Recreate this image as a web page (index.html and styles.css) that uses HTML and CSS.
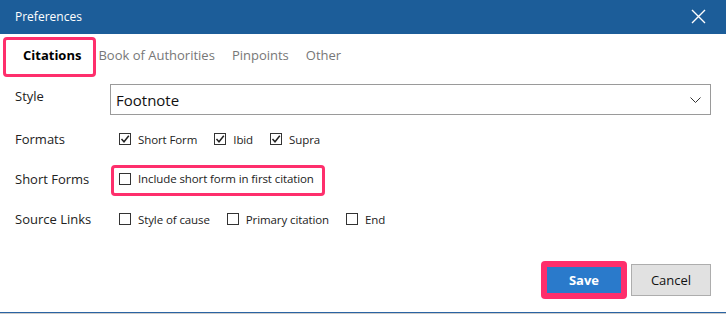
FILE: index.html
```html
<!DOCTYPE html>
<html lang="en">
<head>
  <meta charset="UTF-8" />
  <title>Preferences</title>
  <link rel="stylesheet" href="styles.css">
</head>
<body>
  <div class="dialog">
    <header class="titlebar">
      <span>Preferences</span>
      <svg class="close" width="15" height="15" viewBox="0 0 15 15"><path d="M1 1 L14 14 M14 1 L1 14" stroke="#fff" stroke-width="1.4" fill="none"/></svg>
    </header>

    <nav class="tabs">
      <span class="tab active">Citations</span>
      <span class="tab">Book of Authorities</span>
      <span class="tab">Pinpoints</span>
      <span class="tab">Other</span>
    </nav>

    <main class="form">
      <div class="row row-style">
        <label class="lbl">Style</label>
        <div class="select">
          <span>Footnote</span>
          <svg width="11" height="6" viewBox="0 0 11 6"><path d="M0.5 0.5 L5.5 5.5 L10.5 0.5" stroke="#333" stroke-width="1" fill="none"/></svg>
        </div>
      </div>

      <div class="row row-formats">
        <label class="lbl">Formats</label>
        <div class="checks">
          <span class="check"><span class="box on"><svg width="10" height="10" viewBox="0 0 10 10"><path d="M1.5 5 L4 7.8 L8.8 1.8" stroke="#222" stroke-width="1.5" fill="none"/></svg></span>Short Form</span>
          <span class="check"><span class="box on"><svg width="10" height="10" viewBox="0 0 10 10"><path d="M1.5 5 L4 7.8 L8.8 1.8" stroke="#222" stroke-width="1.5" fill="none"/></svg></span>Ibid</span>
          <span class="check"><span class="box on"><svg width="10" height="10" viewBox="0 0 10 10"><path d="M1.5 5 L4 7.8 L8.8 1.8" stroke="#222" stroke-width="1.5" fill="none"/></svg></span>Supra</span>
        </div>
      </div>

      <div class="row row-short">
        <label class="lbl">Short Forms</label>
        <div class="mark">
          <span class="check"><span class="box"></span>Include short form in first citation</span>
        </div>
      </div>

      <div class="row row-links">
        <label class="lbl">Source Links</label>
        <div class="checks">
          <span class="check"><span class="box"></span>Style of cause</span>
          <span class="check"><span class="box"></span>Primary citation</span>
          <span class="check"><span class="box"></span>End</span>
        </div>
      </div>
    </main>

    <div class="actions">
      <div class="save-mark"><button class="btn save">Save</button></div>
      <button class="btn cancel">Cancel</button>
    </div>
  </div>
  <div class="taskbar"></div>
</body>
</html>
```

FILE: styles.css
```css
body {
  margin: 0;
  width: 726px;
  height: 314px;
  overflow: hidden;
  font-family: 'Open Sans', 'Noto Sans', sans-serif;
  color: #222;
  background: #fff;
}
.dialog { height: 312px; display: flex; flex-direction: column; }

.titlebar {
  height: 33px;
  background-color: #1c5d99;
  color: #fff;
  font-size: 12px;
  display: flex;
  align-items: center;
  justify-content: space-between;
  padding: 0 20px 1px 15px;
}
.close { display: block; }

.tabs { display: flex; align-items: center; gap: 17px; margin: 3px 0 0 3px; height: 40px; }
.tab { font-size: 13px; color: #777; padding-bottom: 4px; }
.tab.active {
  color: #000;
  font-weight: 700;
  border: 3px solid #fe2f6c;
  border-radius: 4px;
  height: 40px;
  box-sizing: border-box;
  display: flex;
  align-items: center;
  padding: 0 12px 4px 17px;
  margin-right: -15px;
}

.form { padding: 0 15px; }
.row { display: flex; align-items: center; }
.lbl { width: 95px; flex: none; font-size: 13px; color: #222; }

.row-style { margin-top: 7px; height: 31px; }
.row-style .lbl { padding-bottom: 8px; }
.select {
  flex: 1;
  height: 31px;
  box-sizing: border-box;
  border: 1px solid #9a9a9a;
  display: flex;
  align-items: center;
  justify-content: space-between;
  padding: 0 9px 0 5px;
  font-size: 15px;
  color: #111;
}

.checks { display: flex; gap: 17px; padding-left: 9px; }
.check { display: flex; align-items: center; font-size: 11.5px; letter-spacing: -0.1px; color: #222; }
.box {
  width: 12px;
  height: 12px;
  box-sizing: border-box;
  border: 1px solid #333;
  background: #fff;
  margin-right: 7px;
  display: flex;
  align-items: center;
  justify-content: center;
}
.box svg { display: block; }

.row-formats { margin-top: 12px; height: 24px; }
.row-short { margin-top: 11px; height: 37px; }
.row-short .lbl { padding-bottom: 4px; }
.mark {
  border: 3px solid #fe2f6c;
  border-radius: 4px;
  margin-left: 1px;
  padding: 3px 8px 7px 5px;
}
.row-links { margin-top: 8px; height: 24px; }

.actions {
  margin-top: auto;
  margin-bottom: 13px;
  display: flex;
  justify-content: flex-end;
  align-items: center;
  gap: 4px;
  padding-right: 15px;
}
.save-mark { background: #fe2f6c; border-radius: 4px; padding: 6px; }
.btn { font-family: inherit; font-size: 13px; display: block; }
.save {
  width: 74px;
  height: 26px;
  border: none;
  background: #2a7acb;
  color: #fff;
  font-weight: 700;
}
.cancel {
  width: 80px;
  height: 32px;
  border: 1px solid #adadad;
  background: #e1e1e1;
  color: #111;
}

.taskbar { height: 2px; border-top: 1px solid #2a64a3; background: #ccc; box-sizing: border-box; }
```
